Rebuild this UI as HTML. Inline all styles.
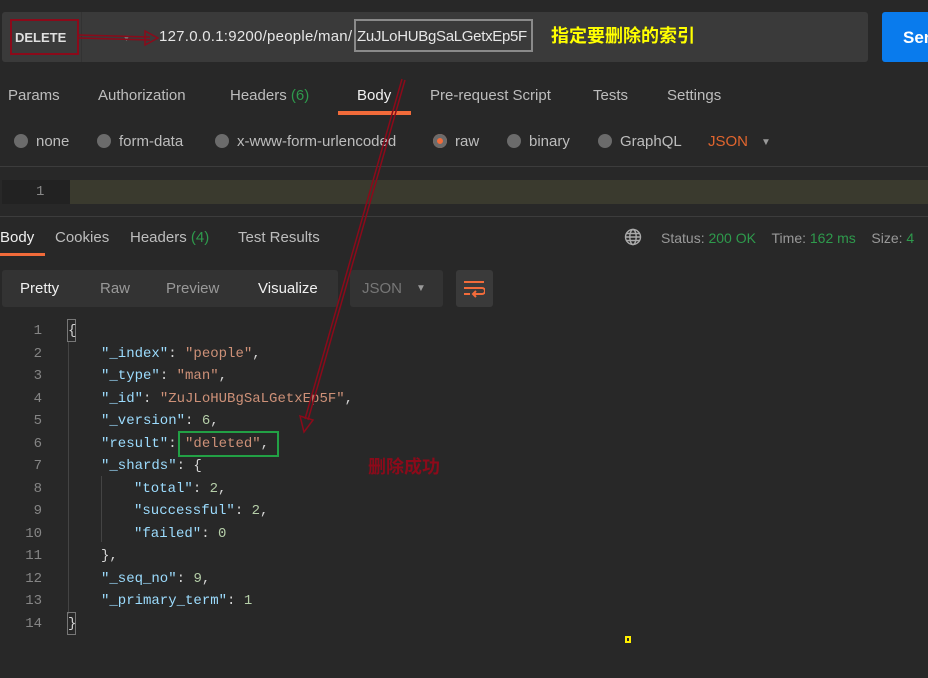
<!DOCTYPE html>
<html><head><meta charset="utf-8"><style>
*{margin:0;padding:0;box-sizing:border-box}
body{width:928px;height:678px;background:#282828;font-family:"Liberation Sans","Noto Sans CJK SC",sans-serif;color:#bdbdbd;position:relative;overflow:hidden;font-size:15px}
.a{position:absolute;white-space:nowrap}
.code{font-family:"Liberation Mono",monospace;font-size:14px}
.k{color:#9cdcfe}.s{color:#ce9178}.n{color:#b5cea8}.p{color:#d4d4d4}
.ln{position:absolute;width:42px;text-align:right;left:0;color:#858585;font-family:"Liberation Mono",monospace;font-size:14px}
.dot{display:inline-block;width:14px;height:14px;border-radius:50%;background:#6b6b6b;vertical-align:-2px;margin-right:8px}
</style></head><body>
<div class="a" style="left:2px;top:12px;width:866px;height:50px;background:#3a3a3a;border-radius:3px"></div>
<div class="a" style="left:81px;top:12px;width:1px;height:50px;background:#333"></div>
<div class="a" style="left:10px;top:19px;width:69px;height:36px;border:2px solid #8b0a1a"></div>
<div class="a" style="left:15px;top:30px;font-size:13px;font-weight:bold;color:#e0e0e0">DELETE</div>
<div class="a" style="left:122px;top:33px;font-size:9px;color:#777">▼</div>
<div class="a" style="left:159px;top:28px;font-size:15px;color:#e6e6e6;letter-spacing:0.25px">127.0.0.1:9200/people/man/</div>
<div class="a" style="left:354px;top:19px;width:179px;height:33px;border:2px solid #8a8a8a"></div>
<div class="a" style="left:357px;top:28px;font-size:15px;color:#e6e6e6;letter-spacing:-0.3px">ZuJLoHUBgSaLGetxEp5F</div>
<div class="a" style="left:551px;top:22px;font-size:18px;font-weight:bold;color:#ffff00">指定要删除的索引</div>
<div class="a" style="left:882px;top:12px;width:60px;height:50px;background:#097bed;border-radius:3px;color:#fff;font-size:17px;font-weight:bold;padding:16px 0 0 21px">Send</div>
<div class="a" style="left:8px;top:87px">Params</div>
<div class="a" style="left:98px;top:87px">Authorization</div>
<div class="a" style="left:230px;top:87px">Headers <span style="color:#2e9a4c">(6)</span></div>
<div class="a" style="left:357px;top:87px;color:#f0f0f0">Body</div>
<div class="a" style="left:338px;top:111px;width:73px;height:4px;background:#f26b3a"></div>
<div class="a" style="left:430px;top:87px">Pre-request Script</div>
<div class="a" style="left:593px;top:87px">Tests</div>
<div class="a" style="left:667px;top:87px">Settings</div>
<div class="a" style="left:14px;top:133px"><span class="dot"></span>none</div>
<div class="a" style="left:97px;top:133px"><span class="dot"></span>form-data</div>
<div class="a" style="left:215px;top:133px"><span class="dot"></span>x-www-form-urlencoded</div>
<div class="a" style="left:433px;top:133px"><span class="dot" style="background:#f26b3a;box-shadow:inset 0 0 0 4px #6b6b6b"></span>raw</div>
<div class="a" style="left:507px;top:133px"><span class="dot"></span>binary</div>
<div class="a" style="left:598px;top:133px"><span class="dot"></span>GraphQL</div>
<div class="a" style="left:708px;top:133px;color:#e0652e">JSON</div>
<div class="a" style="left:761px;top:137px;font-size:10px;color:#999">▼</div>
<div class="a" style="left:0;top:166px;width:928px;height:1px;background:#3c3c3c"></div>
<div class="a" style="left:2px;top:180px;width:926px;height:24px;background:#222"></div>
<div class="a" style="left:70px;top:180px;width:858px;height:24px;background:#3a3a2e"></div>
<div class="a" style="left:36px;top:184px;font-size:14px;color:#888;font-family:'Liberation Mono',monospace">1</div>
<div class="a" style="left:0;top:216px;width:928px;height:1px;background:#3c3c3c"></div>
<div class="a" style="left:0;top:229px;color:#f0f0f0">Body</div>
<div class="a" style="left:0;top:253px;width:45px;height:3px;background:#f26b3a"></div>
<div class="a" style="left:55px;top:229px">Cookies</div>
<div class="a" style="left:130px;top:229px">Headers <span style="color:#2e9a4c">(4)</span></div>
<div class="a" style="left:238px;top:229px">Test Results</div>
<svg class="a" style="left:624px;top:228px" width="18" height="18" viewBox="0 0 18 18" fill="none" stroke="#aaa" stroke-width="1.4"><circle cx="9" cy="9" r="7.5"/><ellipse cx="9" cy="9" rx="3.2" ry="7.5"/><path d="M1.5 9h15M2.5 5.5h13M2.5 12.5h13"/></svg>
<div class="a" style="left:661px;top:230px;font-size:14px;color:#999">Status: <span style="color:#2e9a4c">200 OK</span>&nbsp;&nbsp;&nbsp;&nbsp;Time: <span style="color:#2e9a4c">162 ms</span>&nbsp;&nbsp;&nbsp;&nbsp;Size: <span style="color:#2e9a4c">4</span></div>
<div class="a" style="left:2px;top:270px;width:336px;height:37px;background:#333;border-radius:3px"></div>
<div class="a" style="left:20px;top:280px;color:#f0f0f0">Pretty</div>
<div class="a" style="left:100px;top:280px;color:#999">Raw</div>
<div class="a" style="left:166px;top:280px;color:#999">Preview</div>
<div class="a" style="left:258px;top:280px;color:#f0f0f0">Visualize</div>
<div class="a" style="left:350px;top:270px;width:93px;height:37px;background:#333;border-radius:3px"></div>
<div class="a" style="left:362px;top:280px;color:#777">JSON</div>
<div class="a" style="left:416px;top:283px;font-size:10px;color:#999">▼</div>
<div class="a" style="left:456px;top:270px;width:37px;height:37px;background:#3a3a3a;border-radius:3px"></div>
<svg class="a" style="left:463px;top:279px" width="22" height="20" viewBox="0 0 22 20" fill="none" stroke="#f26b3a" stroke-width="2"><path d="M1 3h20M1 9h18a3 3 0 0 1 0 6h-8M1 15h6M13 12l-3 3 3 3"/></svg>
<div class="a" style="left:67px;top:319px;width:9px;height:23px;border:1px solid #777"></div>
<div class="a" style="left:68px;top:342px;width:1px;height:272px;background:#444"></div>
<div class="a" style="left:101px;top:476px;width:1px;height:66px;background:#444"></div>
<div class="a" style="left:67px;top:612px;width:9px;height:23px;border:1px solid #777"></div>
<div class="code">
<div class="ln" style="top:323px">1</div><div class="ln" style="top:346px">2</div><div class="ln" style="top:368px">3</div><div class="ln" style="top:391px">4</div><div class="ln" style="top:413px">5</div><div class="ln" style="top:436px">6</div><div class="ln" style="top:458px">7</div><div class="ln" style="top:481px">8</div><div class="ln" style="top:503px">9</div><div class="ln" style="top:526px">10</div><div class="ln" style="top:548px">11</div><div class="ln" style="top:571px">12</div><div class="ln" style="top:593px">13</div><div class="ln" style="top:616px">14</div>
<div class="a p" style="left:68px;top:323px">{</div>
<div class="a" style="left:101px;top:346px"><span class="k">"_index"</span><span class="p">: </span><span class="s">"people"</span><span class="p">,</span></div>
<div class="a" style="left:101px;top:368px"><span class="k">"_type"</span><span class="p">: </span><span class="s">"man"</span><span class="p">,</span></div>
<div class="a" style="left:101px;top:391px"><span class="k">"_id"</span><span class="p">: </span><span class="s">"ZuJLoHUBgSaLGetxEp5F"</span><span class="p">,</span></div>
<div class="a" style="left:101px;top:413px"><span class="k">"_version"</span><span class="p">: </span><span class="n">6</span><span class="p">,</span></div>
<div class="a" style="left:101px;top:436px"><span class="k">"result"</span><span class="p">: </span><span class="s">"deleted"</span><span class="p">,</span></div>
<div class="a" style="left:101px;top:458px"><span class="k">"_shards"</span><span class="p">: {</span></div>
<div class="a" style="left:134px;top:481px"><span class="k">"total"</span><span class="p">: </span><span class="n">2</span><span class="p">,</span></div>
<div class="a" style="left:134px;top:503px"><span class="k">"successful"</span><span class="p">: </span><span class="n">2</span><span class="p">,</span></div>
<div class="a" style="left:134px;top:526px"><span class="k">"failed"</span><span class="p">: </span><span class="n">0</span></div>
<div class="a p" style="left:101px;top:548px">},</div>
<div class="a" style="left:101px;top:571px"><span class="k">"_seq_no"</span><span class="p">: </span><span class="n">9</span><span class="p">,</span></div>
<div class="a" style="left:101px;top:593px"><span class="k">"_primary_term"</span><span class="p">: </span><span class="n">1</span></div>
<div class="a p" style="left:68px;top:616px">}</div>
</div>
<div class="a" style="left:178px;top:431px;width:101px;height:26px;border:2px solid #22a045"></div>
<div class="a" style="left:368px;top:453px;font-size:18px;font-weight:bold;color:#8b0a1a">删除成功</div>
<div class="a" style="left:625px;top:636px;width:6px;height:7px;border:2px solid #ffef00"></div>
<svg class="a" style="left:0;top:0" width="928" height="678" fill="none" stroke="#8b0a1a" stroke-width="1.5">
<path d="M79 35 L150 37 M79 38 L150 40"/><path d="M145 31 L158 38 L145 45 Z"/>
<path d="M405 80 L308 420 M402 79 L305 419"/><path d="M300 416 L304 432 L313 420 Z"/>
</svg>
</body></html>
